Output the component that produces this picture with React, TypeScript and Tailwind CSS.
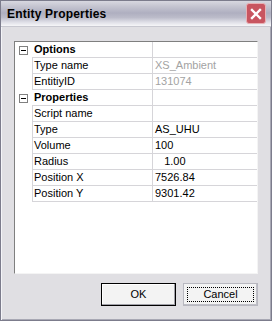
import React from "react";

const font = { fontFamily: '"Liberation Sans", Arial, sans-serif' };

function Minus() {
  return (
    <div className="w-[9px] h-[9px] border border-[#808080] bg-white flex items-center justify-center">
      <div className="w-[5px] h-[1px] bg-black" />
    </div>
  );
}

function Category({ label }: { label: string }) {
  return (
    <div className="flex h-[16px]">
      <div className="w-[17px] flex items-center justify-center pr-[1px]">
        <Minus />
      </div>
      <div className="w-[120px] border-b border-[#d6d5d9] pl-[2px] font-bold text-[11px] leading-[15px] text-black">
        {label}
      </div>
      <div className="w-[105px] border-l border-b border-[#d6d5d9]" />
    </div>
  );
}

function Prop({ name, value, gray, pre }: { name: string; value?: string; gray?: boolean; pre?: boolean }) {
  return (
    <div className="flex h-[16px] text-[11px] leading-[15px]">
      <div className="w-[17px]" />
      <div className="w-[120px] border-l border-b border-[#d6d5d9] pl-[1px] text-black">{name}</div>
      <div
        className={
          "w-[105px] border-l border-b border-[#d6d5d9] pl-[2px] " +
          (gray ? "text-[#a3a3a3] " : "text-black ") +
          (pre ? "whitespace-pre" : "")
        }
      >
        {value}
      </div>
    </div>
  );
}

export default function App() {
  return (
    <div
      className="w-[272px] h-[321px] flex flex-col bg-[#e0dfe3] border border-[#7c7c8c] shadow-[inset_1px_0_0_#f4f4f8,inset_-1px_0_0_#a8a8b4,inset_0_-1px_0_#a8a8b4]"
      style={font}
    >
      <div className="h-[26px] flex items-center justify-between pl-[6px] pr-[5px] bg-[linear-gradient(to_bottom,#d8d8e0_0%,#c4c4d0_22%,#afafc0_48%,#bcbcca_66%,#dedee6_84%,#f6f6f8_100%)] border-b border-[#c8c8d0]">
        <span className="text-[12px] font-bold text-black tracking-[0.2px]">Entity Properties</span>
        <div className="w-[20px] h-[21px] rounded-[3px] bg-[#c85560] border border-[#e8b0b4] flex items-center justify-center">
          <svg width="12" height="12" viewBox="0 0 12 12">
            <path d="M2 2 L10 10 M10 2 L2 10" stroke="#fff" strokeWidth="2.4" strokeLinecap="square" />
          </svg>
        </div>
      </div>
      <div className="flex-1 flex flex-col px-[13px] pt-[14px]">
        <div className="h-[233px] bg-white border border-t-[#7f7f7f] border-l-[#7f7f7f] border-r-[#f4f4f4] border-b-[#f4f4f4]">
          <Category label="Options" />
          <Prop name="Type name" value="XS_Ambient" gray />
          <Prop name="EntitiyID" value="131074" gray />
          <Category label="Properties" />
          <Prop name="Script name" value="" />
          <Prop name="Type" value="AS_UHU" />
          <Prop name="Volume" value="100" />
          <Prop name="Radius" value="   1.00" pre />
          <Prop name="Position X" value="7526.84" />
          <Prop name="Position Y" value="9301.42" />
        </div>
        <div className="flex justify-end gap-[7px] mt-[9px]">
          <button className="w-[75px] h-[23px] border border-black bg-[#f3f3f3] shadow-[inset_-1px_-1px_0_#a0a0a8,inset_1px_1px_0_#ffffff] text-[11px] text-black flex items-center justify-center">
            OK
          </button>
          <button className="w-[75px] h-[23px] border border-[#b8b8c0] bg-[#f3f3f3] shadow-[inset_-1px_-1px_0_#c0c0c8] text-[11px] text-black flex items-center justify-center p-[3px]">
            <span className="w-full h-full border border-dotted border-black flex items-center justify-center">Cancel</span>
          </button>
        </div>
      </div>
    </div>
  );
}
